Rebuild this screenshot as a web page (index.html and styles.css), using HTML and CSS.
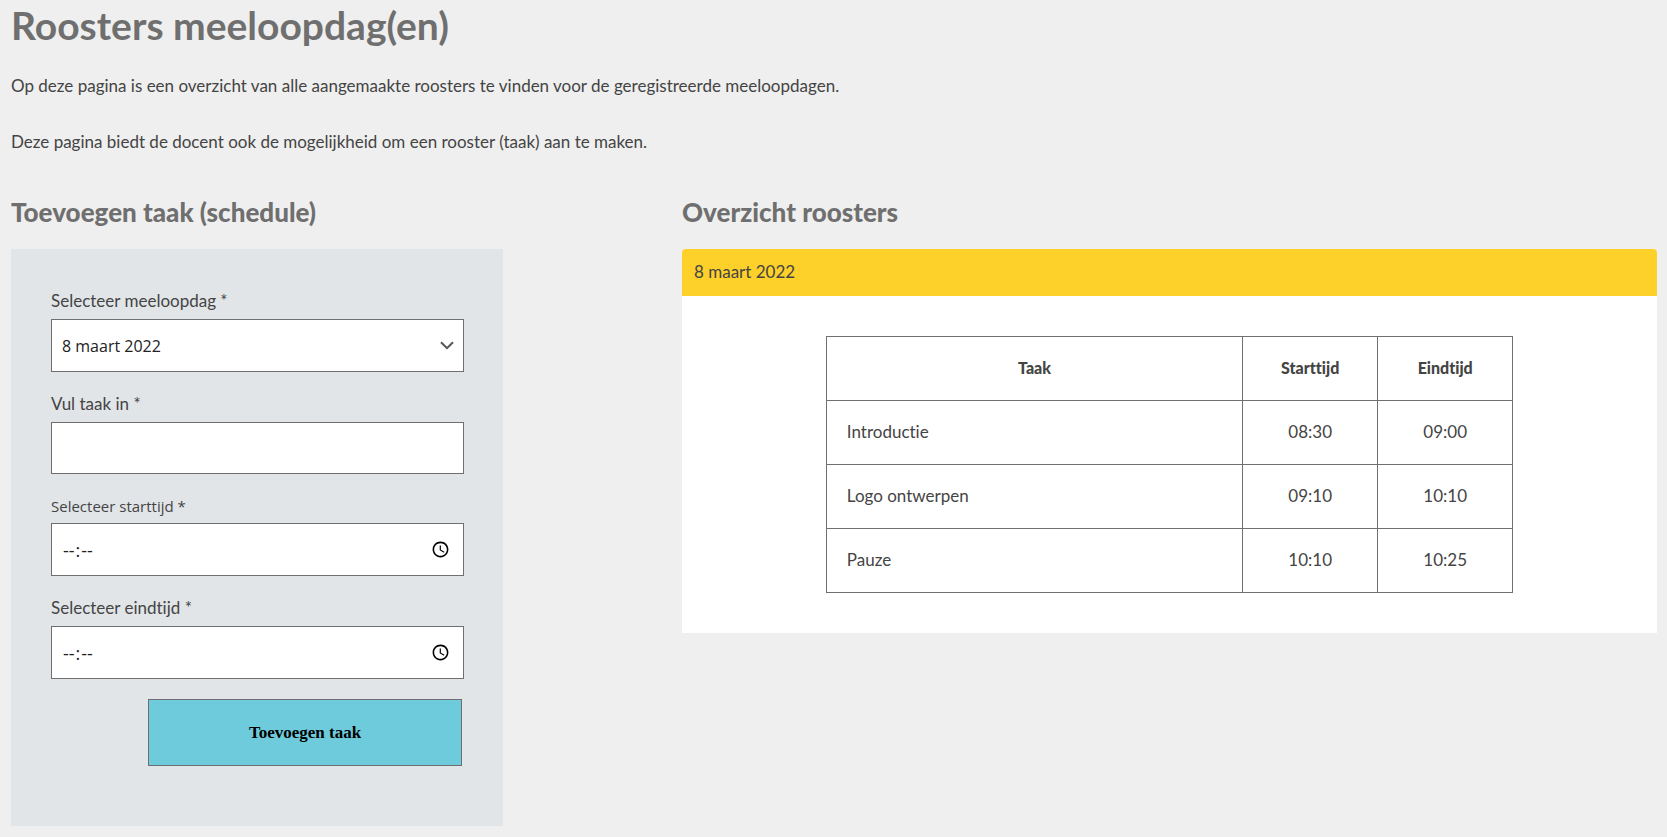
FILE: index.html
```html
<!DOCTYPE html>
<html lang="nl">
<head>
<meta charset="utf-8">
<meta name="viewport" content="width=device-width, initial-scale=1">
<title>Roosters meeloopdag(en)</title>
<link rel="stylesheet" href="styles.css">
</head>
<body>
<main class="page">
  <h1 class="page-title">Roosters meeloopdag(en)</h1>
  <p class="intro">Op deze pagina is een overzicht van alle aangemaakte roosters te vinden voor de geregistreerde meeloopdagen.</p>
  <p class="intro">Deze pagina biedt de docent ook de mogelijkheid om een rooster (taak) aan te maken.</p>
  <div class="columns">
    <section>
      <h2 class="section-title">Toevoegen taak (schedule)</h2>
      <form class="task-form">
        <div class="field">
          <label for="day">Selecteer meeloopdag *</label>
          <div class="select-wrap">
            <select id="day" class="control control-system"><option>8 maart 2022</option></select>
            <svg class="chevron" viewBox="0 0 14 9" fill="none" stroke="#555" stroke-width="2" aria-hidden="true"><path d="M1 1.2 7 7.2 13 1.2"/></svg>
          </div>
        </div>
        <div class="field">
          <label for="task">Vul taak in *</label>
          <input id="task" class="control control-text" type="text">
        </div>
        <div class="field">
          <label class="label-system" for="start">Selecteer starttijd *</label>
          <input id="start" class="control control-time" type="time">
        </div>
        <div class="field">
          <label for="end">Selecteer eindtijd *</label>
          <input id="end" class="control control-time" type="time">
        </div>
        <button class="submit" type="button">Toevoegen taak</button>
      </form>
    </section>
    <section>
      <h2 class="section-title">Overzicht roosters</h2>
      <article class="card">
        <header class="card-header">8 maart 2022</header>
        <div class="card-body">
          <table class="schedule">
            <colgroup><col><col class="time-col"><col class="time-col"></colgroup>
            <thead><tr><th scope="col">Taak</th><th scope="col">Starttijd</th><th scope="col">Eindtijd</th></tr></thead>
            <tbody>
              <tr><td>Introductie</td><td>08:30</td><td>09:00</td></tr>
              <tr><td>Logo ontwerpen</td><td>09:10</td><td>10:10</td></tr>
              <tr><td>Pauze</td><td>10:10</td><td>10:25</td></tr>
            </tbody>
          </table>
        </div>
      </article>
    </section>
  </div>
</main>
</body>
</html>
```
FILE: styles.css
```css
* { box-sizing: border-box; }

body {
  margin: 0;
  background: #efefef;
  color: #444;
  font: 17px/28px Lato, sans-serif;
  font-variant-ligatures: none;
}

.page { padding: 0 10px 11px 11px; }

.page-title {
  margin: 0 0 21px;
  color: #6f6f6f;
  font-size: 39px;
  line-height: 51px;
}

.intro { margin: 0 0 28px; }

.columns {
  display: grid;
  grid-template-columns: 492fr 975fr;
  column-gap: 179px;
}

.section-title {
  margin: 0;
  padding: 4px 0 12px;
  color: #6f6f6f;
  font-size: 26px;
  font-weight: 900;
  line-height: 49px;
}

.task-form {
  padding: 40px 39px 60px 40px;
  background: #e1e5e8;
}

.field { margin-bottom: 20px; }

.field label {
  display: block;
  padding-bottom: 6px;
  line-height: 24px;
}

.field .label-system {
  padding-bottom: 5px;
  font-family: "Open Sans", sans-serif;
  font-size: 15px;
}

.control {
  display: block;
  width: 100%;
  height: 53px;
  padding: 0 10px;
  border: 1px solid #6f6f6f;
  border-radius: 0;
  background: #fff;
  color: #222;
  font: inherit;
}

.control-text { height: 52px; }
.control-system { font: 16px "Open Sans", sans-serif; }
.control-time { font: 18px "Open Sans", sans-serif; }

.select-wrap { position: relative; }
.select-wrap .control { appearance: none; }

.chevron {
  position: absolute;
  top: 22px;
  right: 10px;
  width: 14px;
  height: 9px;
  pointer-events: none;
}

.control::-webkit-datetime-edit-ampm-field { display: none; }

.submit {
  display: block;
  width: 76%;
  height: 67px;
  margin: 0 2px 0 auto;
  border: 1px solid #6f6f6f;
  background: #6ecbdc;
  color: #000;
  font: bold 17px "Liberation Serif", serif;
}

.card { background: #fff; border-radius: 4px 4px 0 0; }

.card-header {
  padding: 9px 12px 10px;
  border-radius: 4px 4px 0 0;
  background: #fdd02a;
}

.card-body { padding: 40px 0; }

.schedule {
  width: 70.5%;
  margin: 0 auto;
  border-collapse: collapse;
  table-layout: fixed;
}

.time-col { width: 135px; }

.schedule th,
.schedule td {
  height: 64px;
  padding: 0 20px 2px;
  border: 1px solid #6f6f6f;
  text-align: center;
}

.schedule th { font-size: 16px; font-weight: 900; }
.schedule td:first-child { text-align: left; }
```
